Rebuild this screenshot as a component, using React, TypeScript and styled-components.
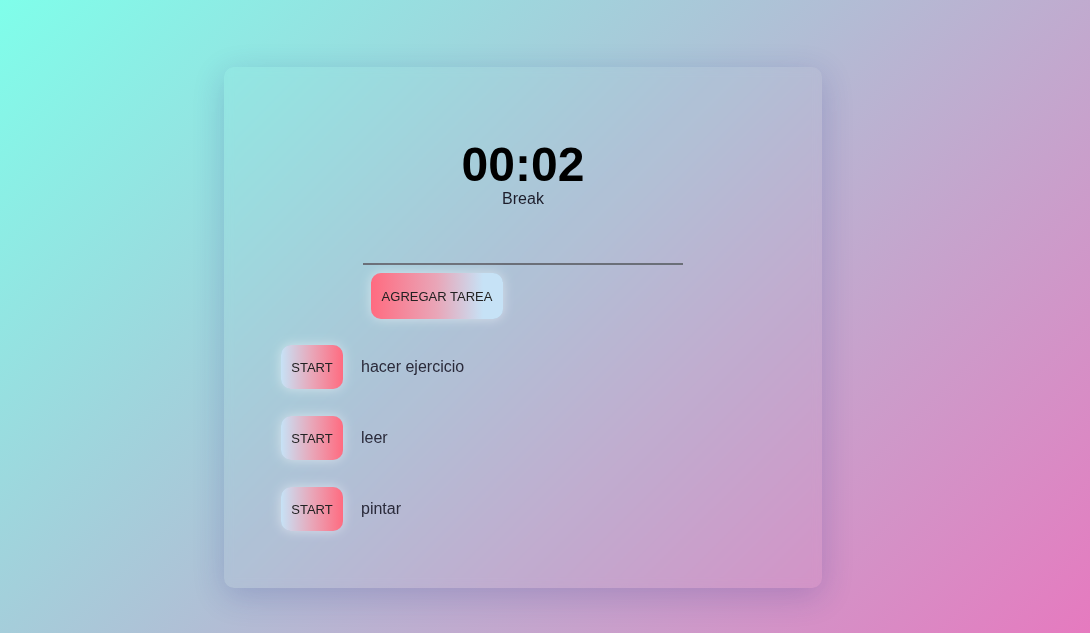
import React, { useState } from "react";
import styled, { createGlobalStyle } from "styled-components";

const GlobalStyle = createGlobalStyle`
    html, body {
        margin: 0;
        padding: 0;
        height: 100%;
    }
    body {
        font-family: "Liberation Sans", Arial, sans-serif;
        background: linear-gradient(135deg, #7ffeea 0%, #e67abf 100%);
        background-attachment: fixed;
        min-height: 633px;
        overflow: hidden;
    }
`;

interface Task {
    id: number;
    name: string;
}

const INITIAL_TASKS: Task[] = [
    { id: 1, name: "hacer ejercicio" },
    { id: 2, name: "leer" },
    { id: 3, name: "pintar" },
];

export default function App() {
    const [tasks, setTasks] = useState<Task[]>(INITIAL_TASKS);
    const [newTask, setNewTask] = useState("");

    const addTask = () => {
        if (!newTask.trim()) return;
        setTasks([...tasks, { id: Date.now(), name: newTask.trim() }]);
        setNewTask("");
    };

    return (
        <>
            <GlobalStyle />
            <Page>
                <Card>
                    <TimerBlock>
                        <Time>00:02</Time>
                        <Mode>Break</Mode>
                    </TimerBlock>

                    <Form
                        onSubmit={(e) => {
                            e.preventDefault();
                            addTask();
                        }}
                    >
                        <TaskInput value={newTask} onChange={(e) => setNewTask(e.target.value)} />
                        <AddButton type="submit">AGREGAR TAREA</AddButton>
                    </Form>

                    <TaskList>
                        {tasks.map((t) => (
                            <TaskRow key={t.id}>
                                <StartButton>START</StartButton>
                                <TaskName>{t.name}</TaskName>
                            </TaskRow>
                        ))}
                    </TaskList>
                </Card>
            </Page>
        </>
    );
}

// Styled Components
const Page = styled.div`
    padding: 67px 0 0 224px;
`;

const Card = styled.div`
    width: 598px;
    box-sizing: border-box;
    padding: 70px 57px 57px;
    border-radius: 10px;
    background: rgba(255, 255, 255, 0.015);
    backdrop-filter: blur(4px);
    box-shadow: 0 8px 32px 0 rgba(31, 38, 135, 0.2);
`;

const TimerBlock = styled.div`
    display: flex;
    flex-direction: column;
    align-items: center;
`;

const Time = styled.h1`
    margin: 0;
    font-size: 48px;
    line-height: 55px;
    font-weight: bold;
    color: #000;
`;

const Mode = styled.div`
    font-size: 16px;
    line-height: 18px;
    margin-top: -2px;
    color: #1d1d2b;
`;

const Form = styled.form`
    width: 320px;
    margin: 33px auto 0;
    display: flex;
    flex-direction: column;
    align-items: flex-start;
`;

const TaskInput = styled.input`
    width: 100%;
    height: 24px;
    box-sizing: border-box;
    border: none;
    border-bottom: 2px solid #6b6f78;
    background: transparent;
    outline: none;
    font-size: 16px;
`;

const AddButton = styled.button`
    margin: 8px 0 0 8px;
    width: 132px;
    height: 46px;
    padding: 0;
    border: none;
    border-radius: 10px;
    font-family: "Liberation Sans", Arial, sans-serif;
    font-size: 13px;
    color: #222;
    background: linear-gradient(90deg, #ff6b80 0%, #e9a6b8 50%, #c6e2f6 85%, #c6e2f6 100%);
    box-shadow: 0 0 12px rgba(255, 255, 255, 0.5);
    cursor: pointer;
`;

const TaskList = styled.ul`
    list-style: none;
    margin: 26px 0 0;
    padding: 0;
    display: flex;
    flex-direction: column;
    gap: 27px;
`;

const TaskRow = styled.li`
    display: flex;
    align-items: center;
    gap: 18px;
`;

const StartButton = styled.button`
    width: 62px;
    height: 44px;
    padding: 0;
    border: none;
    border-radius: 10px;
    font-family: "Liberation Sans", Arial, sans-serif;
    font-size: 13px;
    color: #222;
    background: linear-gradient(90deg, #c6e2f6 0%, #e9a6b8 50%, #ff6b80 100%);
    box-shadow: 0 0 12px rgba(255, 255, 255, 0.5);
    cursor: pointer;
`;

const TaskName = styled.span`
    font-size: 16px;
    color: #2a2a3a;
`;
